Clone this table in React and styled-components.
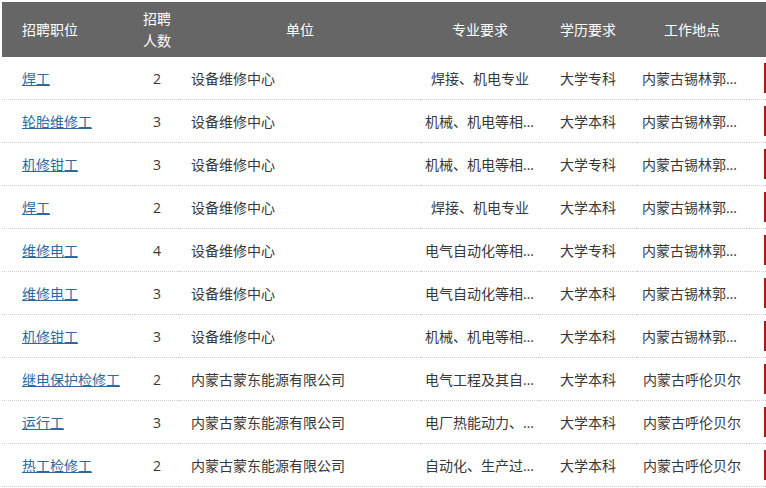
import React from "react";
import styled, { createGlobalStyle } from "styled-components";

const Global = createGlobalStyle`
  html, body { margin: 0; padding: 0; background: #fff; overflow: hidden; }
  body { font-family: "Open Sans", "Noto Sans CJK SC", sans-serif; }
`;

const Wrap = styled.div`
  width: 766px;
  height: 488px;
  overflow: hidden;
  padding: 2px 0 0 2px;
  box-sizing: border-box;
`;

const Table = styled.table`
  table-layout: fixed;
  border-collapse: collapse;
  width: 800px;
  font-size: 14px;
  color: #383838;
`;

const Th = styled.th`
  background: #666666;
  color: #fff;
  font-weight: normal;
  height: 55px;
  line-height: 22px;
  padding: 0 ${(p) => p.$padR ?? p.$pad ?? 4}px 0 ${(p) => p.$pad ?? 4}px;
  text-align: ${(p) => p.$align || "center"};
  vertical-align: middle;
`;

const Td = styled.td`
  height: 42px;
  padding: 0 ${(p) => p.$padR ?? p.$pad ?? 4}px 0 ${(p) => p.$pad ?? 4}px;
  border-bottom: 1px dotted #cfcfcf;
  text-align: ${(p) => p.$align || "center"};
  vertical-align: middle;
  white-space: nowrap;
  overflow: hidden;
  text-overflow: ellipsis;
`;

const Link = styled.a`
  color: #2b6a9e;
  text-decoration: underline;
  cursor: pointer;
`;

const ApplyButton = styled.span`
  display: inline-block;
  width: 60px;
  height: 30px;
  background: #a11d1d;
  vertical-align: middle;
`;

const rows = [
  ["焊工", 2, "设备维修中心", "焊接、机电专业", "大学专科", "内蒙古锡林郭勒盟"],
  ["轮胎维修工", 3, "设备维修中心", "机械、机电等相关专业", "大学本科", "内蒙古锡林郭勒盟"],
  ["机修钳工", 3, "设备维修中心", "机械、机电等相关专业", "大学专科", "内蒙古锡林郭勒盟"],
  ["焊工", 2, "设备维修中心", "焊接、机电专业", "大学本科", "内蒙古锡林郭勒盟"],
  ["维修电工", 4, "设备维修中心", "电气自动化等相关专业", "大学专科", "内蒙古锡林郭勒盟"],
  ["维修电工", 3, "设备维修中心", "电气自动化等相关专业", "大学本科", "内蒙古锡林郭勒盟"],
  ["机修钳工", 3, "设备维修中心", "机械、机电等相关专业", "大学本科", "内蒙古锡林郭勒盟"],
  ["继电保护检修工", 2, "内蒙古蒙东能源有限公司", "电气工程及其自动化专业", "大学本科", "内蒙古呼伦贝尔"],
  ["运行工", 3, "内蒙古蒙东能源有限公司", "电厂热能动力、热能与动力工程", "大学本科", "内蒙古呼伦贝尔"],
  ["热工检修工", 2, "内蒙古蒙东能源有限公司", "自动化、生产过程自动化", "大学本科", "内蒙古呼伦贝尔"],
];

export default function App() {
  return (
    <>
      <Global />
      <Wrap>
        <Table>
          <colgroup>
            <col style={{ width: 133 }} />
            <col style={{ width: 44 }} />
            <col style={{ width: 242 }} />
            <col style={{ width: 118 }} />
            <col style={{ width: 98 }} />
            <col style={{ width: 110 }} />
            <col style={{ width: 55 }} />
          </colgroup>
          <thead>
            <tr>
              <Th $align="left" $pad={20} $padR={4}>招聘职位</Th>
              <Th $pad={8}>招聘人数</Th>
              <Th>单位</Th>
              <Th>专业要求</Th>
              <Th>学历要求</Th>
              <Th>工作地点</Th>
              <Th />
            </tr>
          </thead>
          <tbody>
            {rows.map((r, i) => (
              <tr key={i}>
                <Td $align="left" $pad={20} $padR={4}>
                  <Link>{r[0]}</Link>
                </Td>
                <Td $pad={0}>{r[1]}</Td>
                <Td $align="left" $pad={12}>{r[2]}</Td>
                <Td $pad={4}>{r[3]}</Td>
                <Td $pad={2}>{r[4]}</Td>
                <Td $pad={5}>{r[5]}</Td>
                <Td $align="left" $pad={17}>
                  <ApplyButton />
                </Td>
              </tr>
            ))}
          </tbody>
        </Table>
      </Wrap>
    </>
  );
}
